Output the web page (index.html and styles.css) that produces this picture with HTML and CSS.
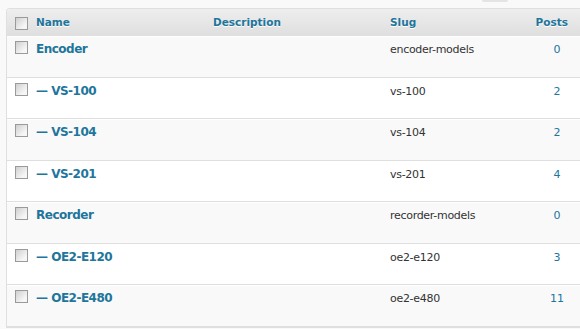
FILE: index.html
```html
<!DOCTYPE html>
<html lang="en">
<head>
  <meta charset="UTF-8">
  <title>Categories</title>
  <link rel="stylesheet" href="styles.css">
</head>
<body>

  <div class="tablenav">
    <span class="tablenav-button"></span>
  </div>

  <table class="widefat">
    <colgroup>
      <col class="col-cb">
      <col class="col-name">
      <col class="col-desc">
      <col class="col-slug">
      <col class="col-posts">
    </colgroup>
    <thead>
      <tr>
        <th class="check-column"><span class="checkbox"></span></th>
        <th>Name</th>
        <th>Description</th>
        <th>Slug</th>
        <th class="num">Posts</th>
      </tr>
    </thead>
    <tbody>
      <tr class="alternate">
        <td class="check-column"><span class="checkbox"></span></td>
        <td class="name"><a href="#">Encoder</a></td>
        <td></td>
        <td class="slug">encoder-models</td>
        <td class="num"><a href="#">0</a></td>
      </tr>
      <tr>
        <td class="check-column"><span class="checkbox"></span></td>
        <td class="name"><a href="#">— VS-100</a></td>
        <td></td>
        <td class="slug">vs-100</td>
        <td class="num"><a href="#">2</a></td>
      </tr>
      <tr class="alternate">
        <td class="check-column"><span class="checkbox"></span></td>
        <td class="name"><a href="#">— VS-104</a></td>
        <td></td>
        <td class="slug">vs-104</td>
        <td class="num"><a href="#">2</a></td>
      </tr>
      <tr>
        <td class="check-column"><span class="checkbox"></span></td>
        <td class="name"><a href="#">— VS-201</a></td>
        <td></td>
        <td class="slug">vs-201</td>
        <td class="num"><a href="#">4</a></td>
      </tr>
      <tr class="alternate">
        <td class="check-column"><span class="checkbox"></span></td>
        <td class="name"><a href="#">Recorder</a></td>
        <td></td>
        <td class="slug">recorder-models</td>
        <td class="num"><a href="#">0</a></td>
      </tr>
      <tr>
        <td class="check-column"><span class="checkbox"></span></td>
        <td class="name"><a href="#">— OE2-E120</a></td>
        <td></td>
        <td class="slug">oe2-e120</td>
        <td class="num"><a href="#">3</a></td>
      </tr>
      <tr class="alternate">
        <td class="check-column"><span class="checkbox"></span></td>
        <td class="name"><a href="#">— OE2-E480</a></td>
        <td></td>
        <td class="slug">oe2-e480</td>
        <td class="num"><a href="#">11</a></td>
      </tr>
    </tbody>
  </table>

</body>
</html>
```

FILE: styles.css
```css
* {
  box-sizing: border-box;
  margin: 0;
  padding: 0;
}

body {
  background-color: #f9f9f9;
  font-family: "DejaVu Sans", Verdana, sans-serif;
  color: #333;
  overflow: hidden;
  padding-left: 6px;
}

.tablenav {
  height: 8px;
  display: flex;
}

.tablenav-button {
  width: 26px;
  height: 2px;
  margin-left: 476px;
  background-color: #e4e4e4;
  border-radius: 0 0 3px 3px;
}

.widefat {
  width: 578px;
  border-collapse: separate;
  border-spacing: 0;
  table-layout: fixed;
  border: 1px solid #dfdfdf;
  border-right: none;
  border-radius: 4px 0 0 0;
  background-color: #fff;
}

.col-cb { width: 22px; }
.col-name { width: 177px; }
.col-desc { width: 177px; }
.col-slug { width: 143px; }
.col-posts { width: 58px; }

.widefat a {
  color: #21759b;
  text-decoration: none;
}

.widefat thead th {
  height: 27px;
  padding: 0 7px;
  text-align: left;
  vertical-align: middle;
  font-size: 10.5px;
  font-weight: bold;
  color: #21759b;
  text-shadow: 0 1px 0 #fff;
  background: linear-gradient(to bottom, #eeeeee, #dfdfdf);
  border-bottom: 1px solid #dfdfdf;
  border-radius: 3px 0 0 0;
}

.widefat thead th + th {
  border-radius: 0;
}

.widefat td {
  height: 41.5px;
  padding: 6px 7px 0;
  vertical-align: top;
  border-bottom: 1px solid #dfdfdf;
  border-top: 1px solid #fff;
  font-size: 11px;
}

.widefat tr.alternate td {
  background-color: #f9f9f9;
}

.widefat .check-column {
  padding: 0 0 0 8px;
}

.widefat thead .check-column {
  padding-top: 2px;
}

.widefat td.check-column {
  padding-top: 4px;
}

.checkbox {
  display: block;
  width: 13px;
  height: 13px;
  border: 1px solid #9a9a9a;
  background: linear-gradient(135deg, #cfcfcf, #f6f6f6 75%);
}

.widefat td.name {
  font-size: 12px;
  font-weight: bold;
  letter-spacing: -0.5px;
  padding-top: 5px;
}

.widefat .slug {
  letter-spacing: -0.3px;
}

.widefat .num {
  text-align: center;
  padding: 6px 0 0 4px;
}

.widefat thead th.num {
  padding: 0 16px 0 0;
  text-align: right;
}
```
